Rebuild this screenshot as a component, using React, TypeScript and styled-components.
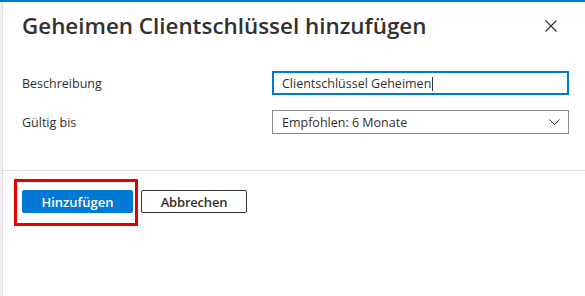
import styled, { createGlobalStyle } from "styled-components";

const GlobalStyle = createGlobalStyle`
  html, body {
    margin: 0;
    padding: 0;
    background: #ffffff;
  }
  body {
    font-family: "Open Sans", "Noto Sans", "Liberation Sans", sans-serif;
    color: #323130;
  }
`;

const Page = styled.div`
  width: 585px;
  height: 296px;
  display: flex;
  flex-direction: column;
  border-top: 2px solid #0078d4;
  box-sizing: border-box;
  overflow: hidden;
`;

const Body = styled.div`
  flex: 1;
  display: flex;
`;

const Edge = styled.div`
  width: 2px;
  background: #f3f2f1;
  border-right: 1px solid #e1dfdd;
`;

const Panel = styled.div`
  flex: 1;
  display: flex;
  flex-direction: column;
`;

const Header = styled.div`
  display: flex;
  align-items: center;
  justify-content: space-between;
  padding: 2px 28px 0 19px;
  height: 44px;
`;

const Title = styled.h1`
  margin: 0;
  font-size: 22.4px;
  font-weight: 600;
  line-height: 30px;
  color: #323130;
`;

const CloseButton = styled.button`
  width: 12px;
  height: 12px;
  padding: 0;
  border: none;
  background: none;
  display: flex;
  cursor: pointer;
`;

const Form = styled.div`
  display: grid;
  grid-template-columns: 250px 1fr;
  row-gap: 15px;
  align-items: center;
  padding: 23px 16px 0 19px;
`;

const Label = styled.label`
  font-size: 12.5px;
  color: #323130;
`;

const Field = styled.div<{ $focused?: boolean }>`
  height: 24px;
  box-sizing: border-box;
  display: flex;
  align-items: center;
  justify-content: space-between;
  border: ${(p) => (p.$focused ? "2px solid #0078d4" : "1px solid #8a8886")};
  padding: ${(p) => (p.$focused ? "0 8px 0 8px" : "0 8px 0 9px")};
  font-size: 12.5px;
  color: #323130;
`;

const Caret = styled.span`
  display: inline-block;
  width: 1px;
  height: 14px;
  background: #323130;
  margin-left: 1px;
  vertical-align: middle;
`;

const Divider = styled.div`
  margin-top: 36px;
  height: 1px;
  background: #e1dfdd;
  margin-left: -3px;
`;

const Footer = styled.div`
  display: flex;
  gap: 8px;
  padding: 19px 19px 0 19px;
`;

const Highlight = styled.div`
  position: relative;
  display: flex;
  &::after {
    content: "";
    position: absolute;
    left: -8px;
    top: -11px;
    right: -5px;
    bottom: -13px;
    border: 3px solid #e60000;
    pointer-events: none;
  }
`;

const Button = styled.button<{ $primary?: boolean }>`
  height: 23px;
  box-sizing: border-box;
  border-radius: 2px;
  font-family: inherit;
  font-size: 13px;
  font-weight: 600;
  padding: 0;
  cursor: pointer;
  border: 1px solid ${(p) => (p.$primary ? "#0078d4" : "#323130")};
  background: ${(p) => (p.$primary ? "#0078d4" : "#ffffff")};
  color: ${(p) => (p.$primary ? "#ffffff" : "#323130")};
  width: ${(p) => (p.$primary ? "111px" : "106px")};
  letter-spacing: ${(p) => (p.$primary ? "0" : "-0.2px")};
`;

function App() {
  return (
    <>
      <GlobalStyle />
      <Page>
        <Body>
          <Edge />
          <Panel>
            <Header>
              <Title>Geheimen Clientschlüssel hinzufügen</Title>
              <CloseButton aria-label="Schließen">
                <svg width="12" height="12" viewBox="0 0 12 12">
                  <path
                    d="M0.5 0.5 L11.5 11.5 M11.5 0.5 L0.5 11.5"
                    stroke="#323130"
                    strokeWidth="1.1"
                  />
                </svg>
              </CloseButton>
            </Header>
            <Form>
              <Label>Beschreibung</Label>
              <Field $focused>
                <span>
                  Clientschlüssel Geheimen
                  <Caret />
                </span>
              </Field>
              <Label>Gültig bis</Label>
              <Field>
                <span>Empfohlen: 6 Monate</span>
                <svg width="11" height="6" viewBox="0 0 11 6">
                  <path
                    d="M0.5 0.5 L5.5 5.5 L10.5 0.5"
                    fill="none"
                    stroke="#323130"
                    strokeWidth="1"
                  />
                </svg>
              </Field>
            </Form>
            <Divider />
            <Footer>
              <Highlight>
                <Button $primary>Hinzufügen</Button>
              </Highlight>
              <Button>Abbrechen</Button>
            </Footer>
          </Panel>
        </Body>
      </Page>
    </>
  );
}

export default App;
